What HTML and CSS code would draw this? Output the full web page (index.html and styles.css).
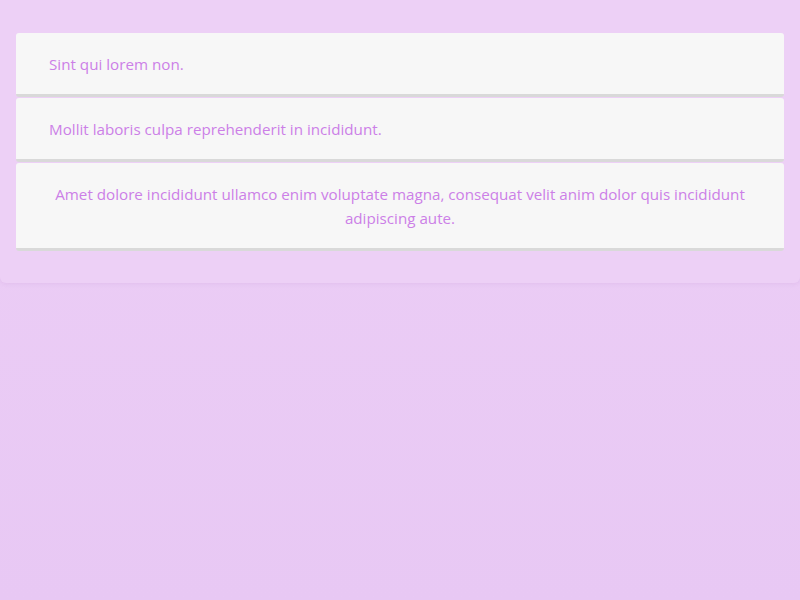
FILE: index.html
```html
<!DOCTYPE html>
<html>
<head>
<meta charset="utf-8">
<link rel="stylesheet" href="styles.css">
</head>
<body>
<div class="panel">
  <div class="card">Sint qui lorem non.</div>
  <div class="card">Mollit laboris culpa reprehenderit in incididunt.</div>
  <div class="card center">Amet dolore incididunt ullamco enim voluptate magna, consequat velit anim dolor quis incididunt adipiscing aute.</div>
</div>
</body>
</html>
```
FILE: styles.css
```css
html, body {
  margin: 0;
  height: 100%;
}
body {
  background: linear-gradient(#edcff6, #e8c8f4);
  font-family: "Open Sans", "Noto Sans", sans-serif;
  font-size: 15.2px;
}
.panel {
  background: #edd0f6;
  padding: 33px 16px 32px;
  border-radius: 0 0 6px 6px;
  box-shadow: 0 1px 4px rgba(150, 80, 170, 0.1);
  display: flex;
  flex-direction: column;
  gap: 1px;
}
.card {
  background: #f7f7f7;
  color: #cc7fe7;
  line-height: 24px;
  padding: 19px 33px 18px;
  border-radius: 3px;
  border-bottom: 3px solid #d9d9d9;
}
.center {
  text-align: center;
}
```
